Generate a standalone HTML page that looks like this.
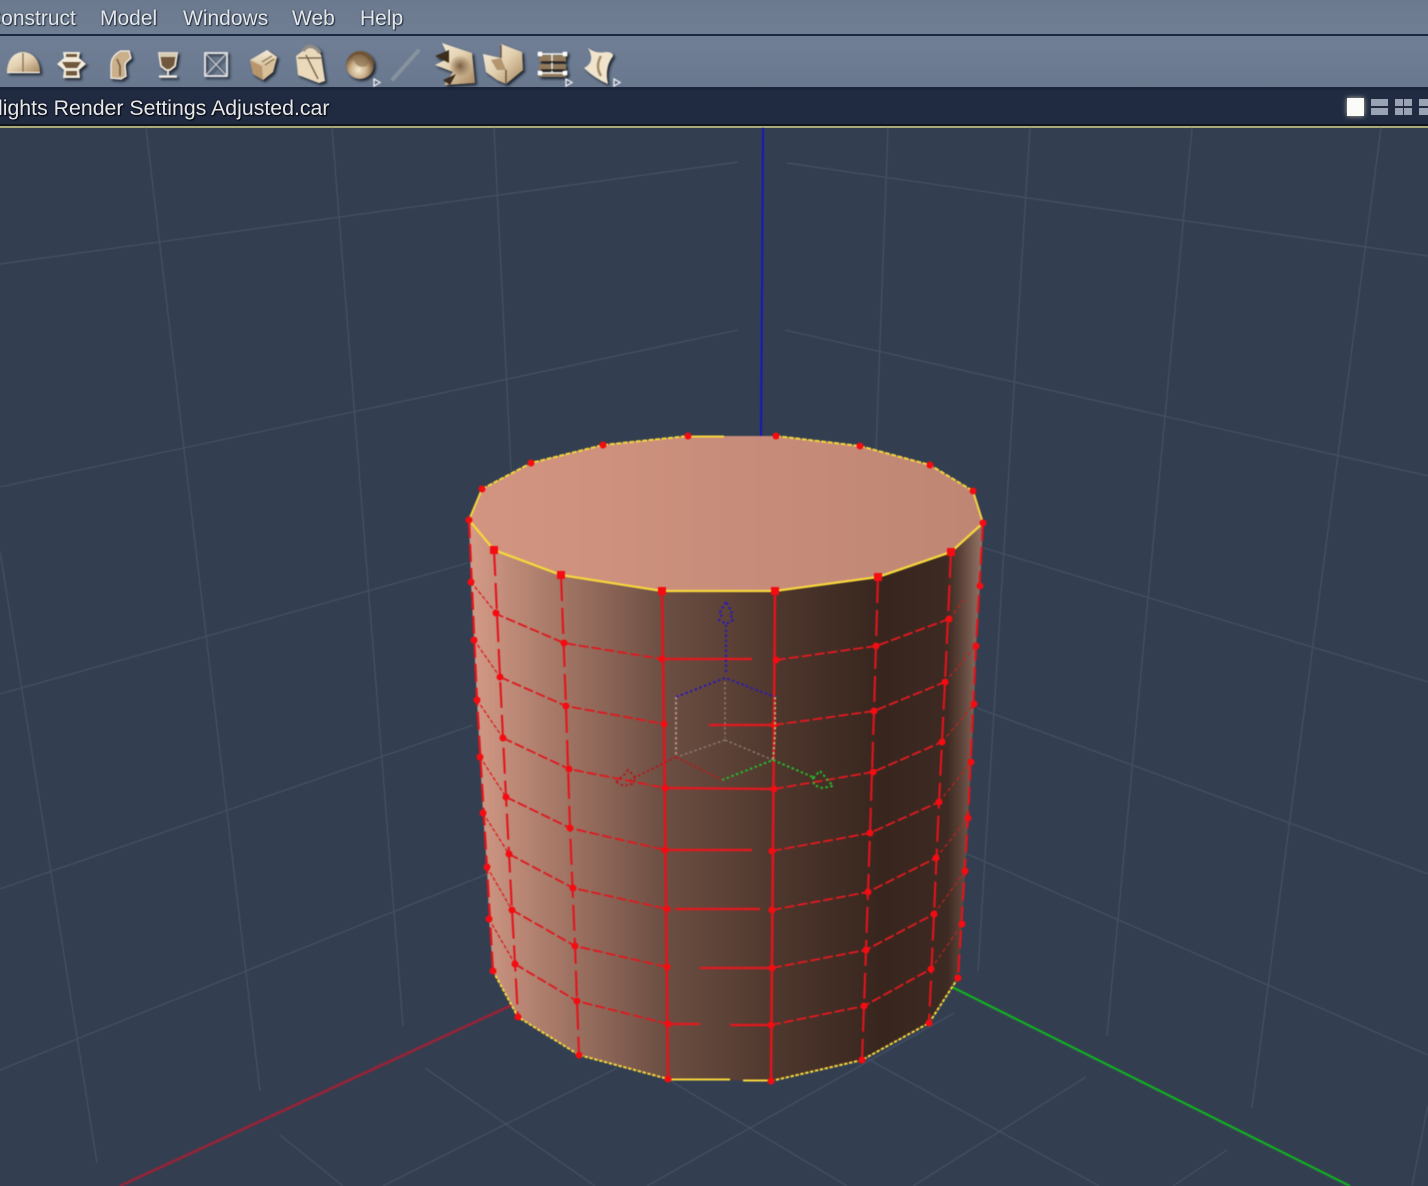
<!DOCTYPE html>
<html lang="en">
<head>
<meta charset="utf-8">
<title>Carrara modeling view</title>
<style>
html,body{margin:0;padding:0;width:1428px;height:1186px;overflow:hidden;background:#333f50}
#s{position:absolute;left:0;top:0;width:1428px;height:1186px;overflow:hidden}
.t{position:absolute;font-family:"Liberation Sans",sans-serif;font-size:21px;line-height:24px;color:#e3e7ea;white-space:nowrap;text-shadow:1px 1px 1px #222b3a,0 0 2px #3a4656}
.b{position:absolute}
</style>
</head>
<body>
<div id="s">
<div class="b" style="left:0;top:0;width:1428px;height:34px;background:linear-gradient(#6c7a8f,#6f7e93)"></div>
<div class="b" style="left:0;top:34px;width:1428px;height:2px;background:#1c2740"></div>
<div class="b" style="left:0;top:36px;width:1428px;height:51px;background:linear-gradient(#707f95,#69788e)"></div>
<div class="b" style="left:0;top:87px;width:1428px;height:3px;background:#1b2439"></div>
<div class="b" style="left:0;top:90px;width:1428px;height:34px;background:#202a41"></div>
<div class="b" style="left:0;top:124px;width:1428px;height:2px;background:#12141c"></div>
<div class="b" style="left:0;top:126px;width:1428px;height:2px;background:#aaa97a"></div>
<div class="t" style="left:-14px;top:7px">Construct</div>
<div class="t" style="left:100px;top:7px">Model</div>
<div class="t" style="left:183px;top:7px">Windows</div>
<div class="t" style="left:292px;top:7px">Web</div>
<div class="t" style="left:360px;top:7px">Help</div>
<div class="t" style="left:-2px;top:96px;font-size:21.3px;color:#e6e8ea;text-shadow:1px 1px 1px #05070d,0 0 2px #05070d">lights Render Settings Adjusted.car</div>

<div class="b" style="left:1347px;top:98px;width:17px;height:18px;background:#fbfbf8;box-shadow:0 0 5px #b5bba5"></div>
<div class="b" style="left:1371px;top:99px;width:17px;height:7px;background:#9aa3b4"></div>
<div class="b" style="left:1371px;top:108px;width:17px;height:7px;background:#9aa3b4"></div>
<div class="b" style="left:1395px;top:99px;width:8px;height:7px;background:#9aa3b4"></div>
<div class="b" style="left:1404px;top:99px;width:8px;height:7px;background:#9aa3b4"></div>
<div class="b" style="left:1395px;top:108px;width:8px;height:7px;background:#9aa3b4"></div>
<div class="b" style="left:1404px;top:108px;width:8px;height:7px;background:#9aa3b4"></div>
<div class="b" style="left:1419px;top:99px;width:9px;height:7px;background:#9aa3b4"></div>
<div class="b" style="left:1419px;top:108px;width:9px;height:7px;background:#9aa3b4"></div>

<svg width="1428" height="90" viewBox="0 0 1428 90" style="position:absolute;left:0;top:0;filter:blur(.4px)">
<defs>
<linearGradient id="g1" x1="0" y1="0" x2="0" y2="1"><stop offset="0" stop-color="#f4ebd9"/><stop offset=".55" stop-color="#d8c3a0"/><stop offset="1" stop-color="#8e7150"/></linearGradient>
<linearGradient id="g2" x1="0" y1="0" x2="1" y2="1"><stop offset="0" stop-color="#f7efdf"/><stop offset=".5" stop-color="#e2cfae"/><stop offset="1" stop-color="#a5865f"/></linearGradient>
<radialGradient id="g3" cx=".45" cy=".68" r=".55"><stop offset="0" stop-color="#f3e8d2"/><stop offset=".55" stop-color="#c8ad86"/><stop offset="1" stop-color="#6f5436"/></radialGradient>
<radialGradient id="g4" cx=".5" cy=".5" r=".5"><stop offset="0" stop-color="#7a5f42"/><stop offset="1" stop-color="#7a5f42" stop-opacity="0"/></radialGradient>
<filter id="sh" x="-30%" y="-30%" width="170%" height="170%"><feDropShadow dx="2" dy="2" stdDeviation="1.200" flood-color="#141a28" flood-opacity=".95"/></filter>
</defs>
<g filter="url(#sh)">
<!-- dome -->
<path d="M7 72C7 60 14 52 23 52C32 52 40 60 40 72Z" fill="url(#g2)"/>
<path d="M23 53V72" stroke="#7c6a55" stroke-width="1.200"/>
<path d="M7 72.500H40" stroke="#f4efe6" stroke-width="1.200"/>
<!-- spindle -->
<path d="M63 52H80L79 58L86 64L79 70L80 78H63L64 70L57 64L64 58Z" fill="#f3ecdd"/>
<path d="M66 54H77V57H66ZM62 62H81L77 68H66ZM66 71H77V75.500H66Z" fill="#6f583e"/>
<!-- bent pipe -->
<path d="M111 78V65C111 58 116 53 121 51L129 51L131 58C128 61 125 62 125 66L126 76L121 79Z" fill="#c9b08a" stroke="#f5f0e6" stroke-width="1.300"/>
<path d="M117 59L120 66V76" stroke="#6f573d" stroke-width="1.500" fill="none"/>
<!-- goblet -->
<path d="M159 53H177L175 66L170 70H166L161 66Z" fill="#71583d" stroke="#f0e8da" stroke-width="1.800"/>
<path d="M159 53H177L176 57H160Z" fill="#d8cbb3"/>
<path d="M168 70V75" stroke="#f0e8da" stroke-width="2"/>
<path d="M159 76.500H177" stroke="#f5f0e6" stroke-width="2.200"/>
<!-- wire box -->
<rect x="205" y="53" width="22" height="23" fill="none" stroke="#eef0ef" stroke-width="1.700"/>
<path d="M205 53L227 76M227 53L205 76" stroke="#d2d5d5" stroke-width="1"/>
<!-- cube -->
<path d="M250 60L267 50L277 57L273 72L263 80L253 74Z" fill="url(#g1)"/>
<path d="M250 60L262 66L263 80L253 74Z" fill="#b8966c"/>
<path d="M262 66L277 57L273 72L263 80Z" fill="#d8c09a"/>
<path d="M262 62L272 56M265 65L274 59" stroke="#8a7152" stroke-width="1.300"/>
<!-- bag -->
<path d="M296 56L304 50L309 46L318 50L321 55L325 81L319 83L298 75Z" fill="#ead9bb"/>
<path d="M303 51C307 44 315 45 320 53" stroke="#8f8c86" stroke-width="3.500" fill="none"/>
<path d="M306 55L318 79M298 58H321" stroke="#6d5a43" stroke-width="1.300"/>
<!-- sphere -->
<circle cx="360" cy="65" r="14" fill="url(#g3)"/>
<path d="M352 57C358 52 367 55 369 62C367 68 360 68 356 64Z" fill="#8d7252" opacity=".7"/>
<!-- spikes -->
<path d="M442 43L472 53L475 83L444 85L453 72L435 65L449 58Z" fill="url(#g2)"/>
<path d="M435 56L449 50V63ZM443 80L456 74L450 85Z" fill="#3b2d1f"/>
<ellipse cx="460" cy="66" rx="11" ry="11" fill="url(#g4)"/>
<!-- block -->
<path d="M483 54L501 58V44L522 52L523 70L506 84L497 80L486 72Z" fill="url(#g2)"/>
<path d="M491 60L501 58L506 70L497 70Z" fill="#b39670"/>
<path d="M506 70V84M501 45V58" stroke="#6f573d" stroke-width="1.500" fill="none"/>
<!-- stack -->
<path d="M539 55H566V62H539ZM539 64H566V70H539ZM539 72H566V77H539Z" fill="#8f7a5d"/>
<path d="M540 54H565M540 73H565M552 54V73" stroke="#f4f4f2" stroke-width="1.400"/>
<path d="M540 54h0M565 54h0M540 73h0M565 73h0" stroke="#fff" stroke-width="4.500" stroke-linecap="square"/>
<path d="M541 62H565M541 70H565" stroke="#2d241a" stroke-width="1.500"/>
<!-- twisted -->
<path d="M588 48Q596 54 606 52Q613 52 613 56Q604 68 608 84Q594 78 584 68Q596 62 588 48Z" fill="#f0e4cd"/>
<path d="M601 56Q595 66 601 76" stroke="#a68c68" stroke-width="2.500" fill="none"/>
</g>
<path d="M393 79L418 51" stroke="#87929f" stroke-width="4" stroke-linecap="round"/>
<path d="M374 79v7l6-3.500zM566 79v7l6-3.500zM614 79v7l6-3.500z" fill="#5d6b80" stroke="#f0f3f5" stroke-width="1.300"/>
</svg>

<svg width="1428" height="1186" viewBox="0 0 1428 1186" style="position:absolute;left:0;top:0;filter:blur(.45px)">
<defs>
<linearGradient id="body" gradientUnits="userSpaceOnUse" x1="469" y1="0" x2="983" y2="0">
<stop offset="0" stop-color="#d59b87"/>
<stop offset=".06" stop-color="#c48f7c"/>
<stop offset=".18" stop-color="#a37665"/>
<stop offset=".37" stop-color="#6e5044"/>
<stop offset=".5" stop-color="#5c4237"/>
<stop offset=".6" stop-color="#4e372d"/>
<stop offset=".8" stop-color="#38261e"/>
<stop offset=".93" stop-color="#3d2a22"/>
<stop offset=".96" stop-color="#5f463b"/>
<stop offset="1" stop-color="#967668"/>
</linearGradient>
<linearGradient id="top" gradientUnits="userSpaceOnUse" x1="469" y1="0" x2="983" y2="0">
<stop offset="0" stop-color="#d29581"/>
<stop offset="1" stop-color="#bf8674"/>
</linearGradient>
</defs>

<!-- grid -->
<g stroke="#434f63" stroke-width="1.400" fill="none">
<path d="M146 128L260 1091M332 128L403 1026M494 128L511 470M0 551L97 1163"/>
<path d="M0 264L738 162M0 487L738 330M0 694L468 563M0 889L473 725M0 1070L487 874"/>
<path d="M888 128L876 450M1030 128L978 971M1192 128L1107 1036M1381 128L1252 1108M1428 1105L1412 1186"/>
<path d="M787 163L1428 256M785 330L1428 476M984 548L1428 682M977 708L1428 874M965 853L1428 1055"/>
<path d="M280 1135L343 1186M425 1068L595 1186M383 1186L617 1068M669 1080L847 1186M647 1186L954 1013M866 1058L1099 1186M913 1186L1086 1077M1173 1186L1227 1150"/>
</g>

<!-- axes -->
<path d="M763 128L762 290L761 437" stroke="#1616c0" stroke-width="2" fill="none"/>
<path d="M120 1186L512 1005" stroke="#94243a" stroke-width="2.800"/>
<path d="M952 987L1350 1186" stroke="#15ad25" stroke-width="2.300"/>

<!-- cylinder -->
<polygon fill="url(#body)" points="469,520 471,582 474,640 477,700 480,757 483,813 487,867 489,919 493,971 518,1017 579,1055 668,1079 771,1081 862,1060 929,1023 958,978 962,924 965,871 968,818 971,762 974,704 976,646 980,586 983,523"/>
<polygon fill="url(#top)" points="469,520 482,489 531,463 603,445 688,436 776,436 860,446 930,465 973,491 983,523 951,552 878,577 775,591 662,591 561,575 494,550"/>

<!-- rims -->
<g fill="none" stroke="#f6d63c">
<path d="M469 520L494 550L561 575L662 591H775L878 577L951 552L983 523" stroke-width="2.300"/>
<path d="M469 520L482 489" stroke-width="2"/>
<path d="M973 491L983 523" stroke-width="2"/>
<path d="M482 489L531 463L603 445L688 436M776 436L860 446L930 465L973 491" stroke-width="2" stroke-dasharray="5 1.500"/>
<path d="M688 436.500H724" stroke-width="2"/>
<path d="M493 971L518 1017L579 1055L668 1079" stroke-width="2" stroke-dasharray="3.500 1.500"/>
<path d="M668 1079.500H730M743 1080.500H771" stroke-width="2"/>
<path d="M771 1081L862 1060L929 1023L958 978" stroke-width="2" stroke-dasharray="3.500 1.500"/>
</g>

<!-- vertical wires -->
<g fill="none" stroke="#e3141c">
<path d="M662 591L664 724L668 1079M775 591L774 725L771 1081" stroke-width="2.500"/>
<g stroke-width="2.100" stroke-dasharray="26 7">
<path d="M494 550L500 677L506 797L512 910L518 1017"/>
<path d="M561 575L566 706L570 828L575 946L579 1055"/>
<path d="M878 577L874 711L870 833L866 950L862 1060"/>
<path d="M951 552L945 682L939 802L934 914L929 1023"/>
</g>
<g stroke-width="2.200" stroke-dasharray="18 6">
<path d="M469 520L477 700L487 867L493 971"/>
<path d="M983 523L976 646L968 818L958 978"/>
</g>
</g>

<!-- rows -->
<g fill="none" stroke="#de1a20" stroke-width="1.900">
<g stroke-dasharray="10 3">
<path d="M494 613L564 643L662 659"/>
<path d="M500 677L566 706L664 724"/>
<path d="M503 738L569 769L665 788"/>
<path d="M506 797L570 828L665 850"/>
<path d="M509 854L573 888L667 909"/>
<path d="M512 910L575 946L667 967"/>
<path d="M515 964L577 1001L668 1024"/>
<path d="M776 660L876 646L949 619"/>
<path d="M774 725L874 711L945 682"/>
<path d="M774 789L873 772L942 742"/>
<path d="M772 851L870 833L939 802"/>
<path d="M772 910L868 892L936 858"/>
<path d="M772 968L866 950L934 914"/>
<path d="M771 1025L864 1006L931 969"/>
</g>
<g stroke-width="1.300" stroke-dasharray="4 2">
<path d="M471 582L496 613M474 640L500 677M477 700L503 738M480 757L506 797M483 813L509 854M487 867L512 910M489 919L515 964"/>
</g>
<g stroke-width="1.200" stroke-dasharray="4 3" stroke="#c4201f">
<path d="M949 619L964 600M945 682L976 646M942 742L974 704M939 802L971 762M936 858L968 818M934 914L965 871M931 969L962 924"/>
</g>
<g stroke-width="2.400">
<path d="M662 659H752M709 725H774M665 788L774 789M665 850H752M675 909H760M700 968H772M668 1024H700M730 1025H771"/>
</g>
</g>

<!-- vertices -->
<path stroke="#f40c12" stroke-width="7" stroke-linecap="round" fill="none" d="M469 520h0M471 582h0M474 640h0M477 700h0M480 757h0M483 813h0M487 867h0M489 919h0M493 971h0M482 489h0M531 463h0M603 445h0M688 436h0M776 436h0M860 446h0M930 465h0M973 491h0M983 523h0M496 613h0M500 677h0M503 738h0M506 797h0M509 854h0M512 910h0M515 964h0M518 1017h0M564 643h0M566 706h0M569 769h0M570 828h0M573 888h0M575 946h0M577 1001h0M579 1055h0M662 659h0M664 724h0M665 788h0M665 850h0M667 909h0M667 967h0M668 1024h0M668 1079h0M776 660h0M774 725h0M774 789h0M772 851h0M772 910h0M772 968h0M771 1025h0M771 1081h0M876 646h0M874 711h0M873 772h0M870 833h0M868 892h0M866 950h0M864 1006h0M862 1060h0M949 619h0M945 682h0M942 742h0M939 802h0M936 858h0M934 914h0M931 969h0M929 1023h0M980 586h0M976 646h0M974 704h0M971 762h0M968 818h0M965 871h0M962 924h0M958 978h0"/>
<path stroke="#f40c12" stroke-width="8" stroke-linecap="square" fill="none" d="M494 550h0M561 575h0M662 591h0M775 591h0M878 577h0M951 552h0"/>

<!-- gizmo -->
<g fill="none" stroke-width="2" stroke-dasharray="2.500 2.500">
<g stroke="#2a1ab8">
<path d="M726 672V625M726 602L720 612L722 614L719 620L726 624L733 620L730 614L732 612Z"/>
<path d="M676 697L725 678L775 697"/>
</g>
<path d="M676 697V757" stroke="#b98f88"/>
<path d="M775 697V735L773 760" stroke="#b5b06a"/>
<path d="M725 682V738M725 740L677 757M725 740L773 760" stroke="#8d7a6e" stroke-width="1.500"/>
<g stroke="#b01c20">
<path d="M676 757L722 780M676 757L630 780"/>
<path d="M616 782L625 774L628 770L636 778L632 784L624 786Z"/>
</g>
<g stroke="#26b82c">
<path d="M722 780L773 760L815 778"/>
<path d="M813 778L820 771L826 778L833 786L822 788L814 785Z"/>
</g>
</g>
</svg>
</div>
</body>
</html>
